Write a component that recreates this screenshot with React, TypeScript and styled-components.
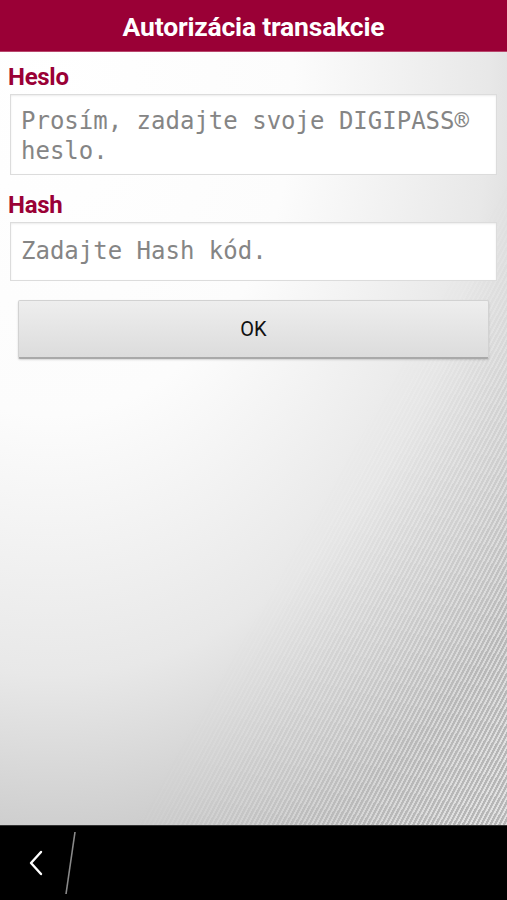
import React from "react";
import styled, { createGlobalStyle } from "styled-components";

const Global = createGlobalStyle`
  html, body { margin: 0; padding: 0; background: #000; }
  body { font-family: Roboto, "Noto Sans", sans-serif; }
  * { box-sizing: border-box; }
`;

const Screen = styled.div`
  width: 507px;
  height: 900px;
  display: flex;
  flex-direction: column;
  overflow: hidden;
`;

const Header = styled.header`
  height: 52px;
  flex: none;
  background: #9a0036;
  border-bottom: 1px solid #b8466c;
  display: flex;
  align-items: center;
  justify-content: center;
  color: #fff;
  font-family: Roboto, sans-serif;
  font-weight: 700;
  font-size: 26.5px;
  letter-spacing: -0.2px;
  padding-top: 2px;
`;

const Content = styled.main`
  flex: 1;
  position: relative;
  background: radial-gradient(ellipse 120% 105% at 10% 5%, #ffffff 0%, #fcfcfc 40%, #e8e8e8 72%, #c2c2c2 100%);
  padding: 10px 10px 0 10px;
  display: flex;
  flex-direction: column;
  &::before {
    content: "";
    position: absolute;
    inset: 0;
    background: repeating-linear-gradient(
      -62deg,
      rgba(255, 255, 255, 0.5) 0px,
      rgba(255, 255, 255, 0.5) 1.5px,
      rgba(0, 0, 0, 0.06) 2px,
      rgba(0, 0, 0, 0.06) 4px
    );
    -webkit-mask-image: linear-gradient(120deg, transparent 60%, #000 95%);
    mask-image: linear-gradient(120deg, transparent 60%, #000 95%);
    pointer-events: none;
  }
`;

const Field = styled.section`
  position: relative;
  display: flex;
  flex-direction: column;
`;

const Label = styled.label`
  color: #9a0036;
  font-family: Roboto, sans-serif;
  font-weight: 700;
  font-size: 24px;
  line-height: 30px;
  margin-left: -2px;
  letter-spacing: -0.3px;
`;

const InputBox = styled.div<{ $h: number }>`
  margin-top: 2px;
  height: ${(p) => p.$h}px;
  background: #fff;
  border: 1px solid #dcdcdc;
  box-shadow: inset 0 1px 2px rgba(0, 0, 0, 0.08);
  padding: ${(p) => (p.$h > 70 ? "11px" : "13px")} 10px 0 10px;
  font-family: "DejaVu Sans Mono", "Liberation Mono", monospace;
  font-size: 24px;
  line-height: 30px;
  color: #858585;
  margin-bottom: 15px;
`;

const OkButton = styled.button`
  position: relative;
  margin: 4px 8px 0 8px;
  height: 59px;
  border: 1px solid #d2d2d2;
  border-bottom: 2px solid #a9a9a9;
  border-radius: 2px;
  background: linear-gradient(#eeeeee, #dcdcdc);
  box-shadow: 0 1px 2px rgba(0, 0, 0, 0.15);
  font-family: Roboto, sans-serif;
  font-size: 20px;
  color: #111;
  padding: 0;
`;

const BottomBar = styled.footer`
  height: 75px;
  flex: none;
  background: #000;
  border-top: 1px solid #333;
  display: flex;
  align-items: center;
`;

const BackIcon = styled.svg`
  margin-left: 28px;
  width: 16px;
  height: 26px;
`;

const Divider = styled.svg`
  margin-left: 20px;
  width: 14px;
  height: 64px;
`;

export default function App() {
  return (
    <Screen>
      <Global />
      <Header>Autorizácia transakcie</Header>
      <Content>
        <Field>
          <Label>Heslo</Label>
          <InputBox $h={81}>
            Prosím, zadajte svoje DIGIPASS®
            <br />
            heslo.
          </InputBox>
        </Field>
        <Field>
          <Label>Hash</Label>
          <InputBox $h={59}>Zadajte Hash kód.</InputBox>
        </Field>
        <OkButton>OK</OkButton>
      </Content>
      <BottomBar>
        <BackIcon viewBox="0 0 16 26">
          <path d="M13 2 L3 13 L13 24" fill="none" stroke="#fff" strokeWidth="2.4" strokeLinecap="round" strokeLinejoin="round" />
        </BackIcon>
        <Divider viewBox="0 0 14 64">
          <line x1="11" y1="1" x2="2" y2="63" stroke="#8a8a8a" strokeWidth="1.6" />
        </Divider>
      </BottomBar>
    </Screen>
  );
}
